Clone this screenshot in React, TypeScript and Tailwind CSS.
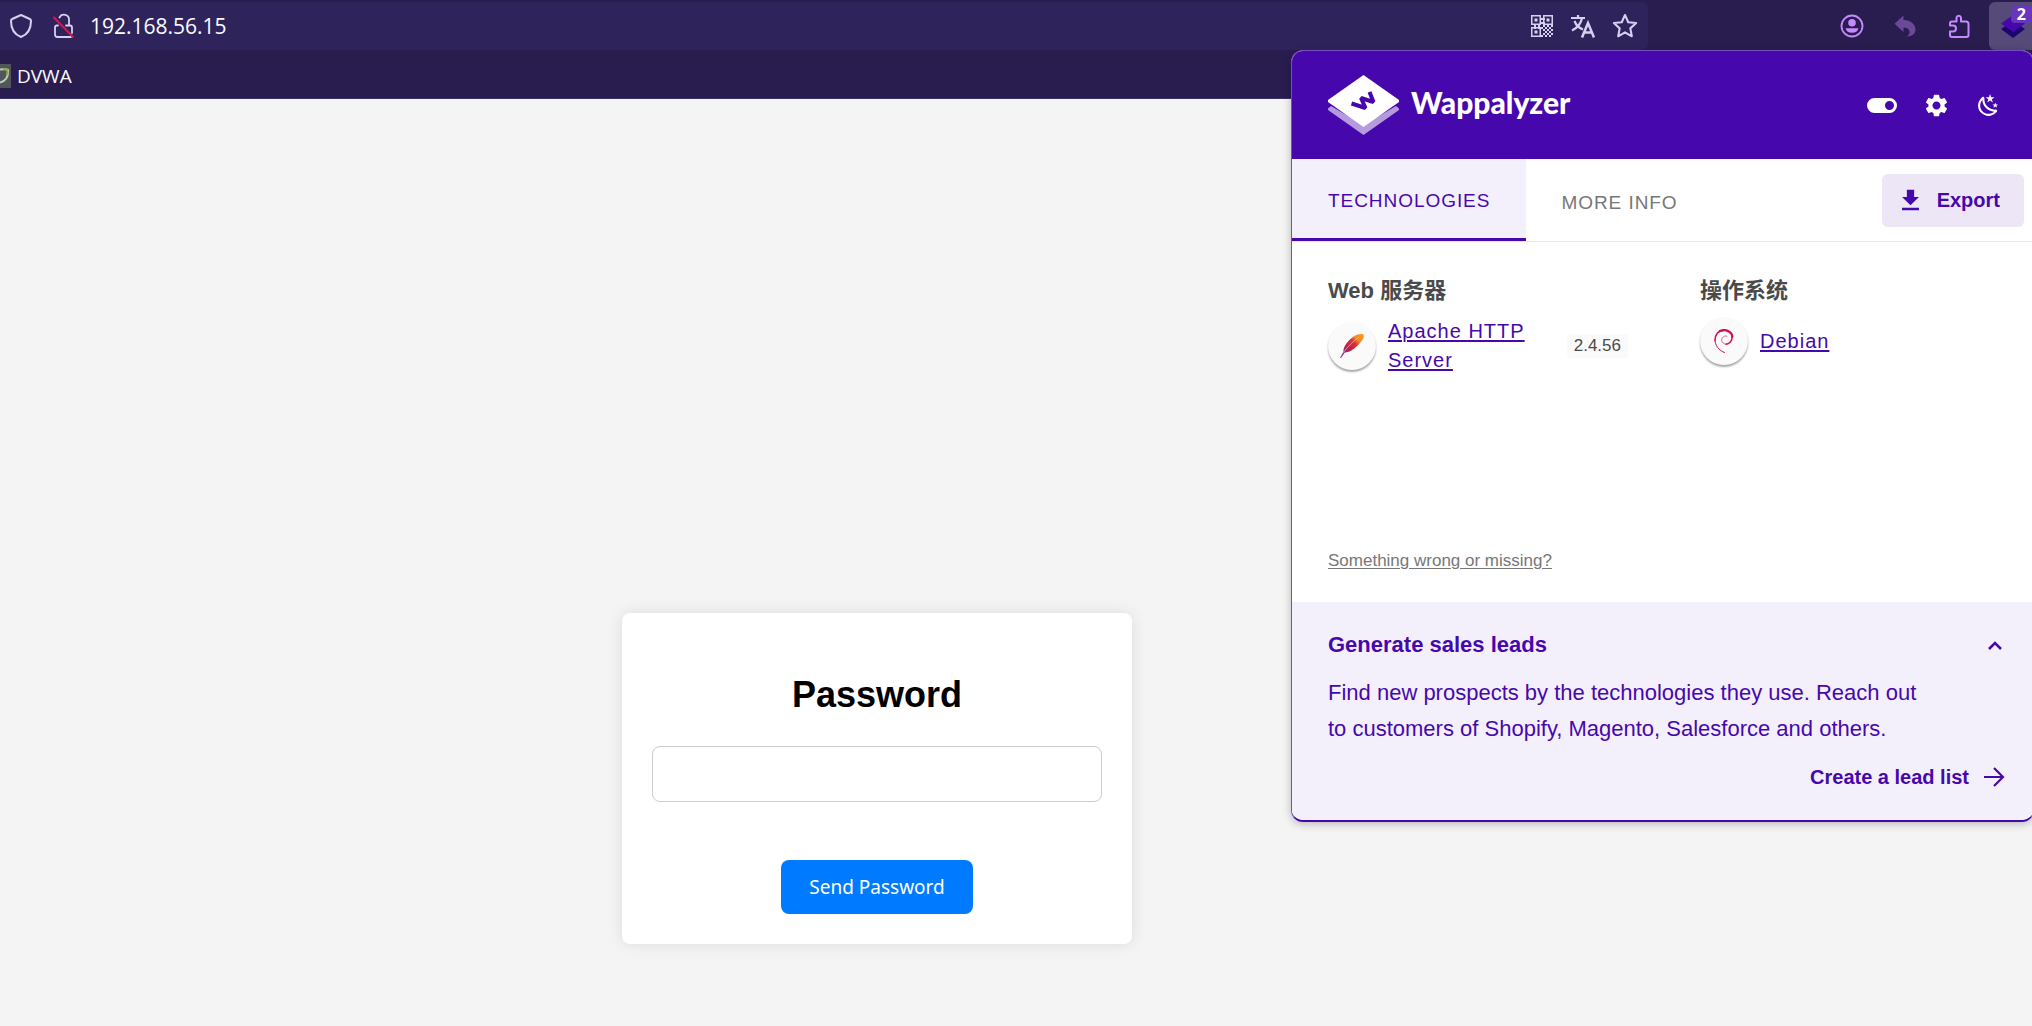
import React from "react";
import { MdDownload, MdSettings } from "react-icons/md";

const ui = "font-['Open_Sans','Noto_Sans_CJK_SC',sans-serif]";
const body = "font-['Liberation_Sans','Noto_Sans_CJK_SC',sans-serif]";

const stroke = { fill: "none", stroke: "currentColor", strokeLinecap: "round", strokeLinejoin: "round" } as const;

function ShieldIcon() {
  return (
    <svg viewBox="0 0 24 26" className="h-[26px] w-6" {...stroke} strokeWidth={2}>
      <path d="M12 2 L20.8 6 Q22 6.500 22 8 C22 16 18.500 21.500 12 24 C5.500 21.500 2 16 2 8 Q2 6.500 3.200 6 Z" />
    </svg>
  );
}

function LockIcon() {
  return (
    <svg viewBox="0 0 24 26" className="h-[26px] w-6" {...stroke} strokeWidth={1.8}>
      <path d="M8.500 4.500 A5 5 0 0 1 18 7 V12" />
      <path d="M7 12.500 H6 Q4 12.500 4 14.500 V21.500 Q4 24 6.500 24 H20 M21 20 V14.500 Q21 12.500 19 12.500 H15" />
      <path d="M2.500 4 L22.500 24.500" stroke="#e3124a" strokeWidth={2} strokeLinecap="butt" />
    </svg>
  );
}

function QrIcon() {
  const cells = [
    [10, 3], [12, 3], [10, 7], [12, 7], [3, 10], [3, 12], [7, 10], [7, 12],
    [12, 10], [16, 10], [20, 10], [10, 12], [14, 12], [18, 12],
    [12, 14], [16, 14], [20, 14], [14, 16], [18, 16],
    [12, 18], [16, 18], [20, 18], [14, 20], [18, 20], [10, 20],
  ];
  return (
    <svg viewBox="0 0 22 22" className="size-[22px]" fill="currentColor">
      <g fill="none" stroke="currentColor" strokeWidth={1.5}>
        <rect x="0.750" y="0.750" width="8.500" height="8.500" />
        <rect x="12.750" y="0.750" width="8.500" height="8.500" />
        <rect x="0.750" y="12.750" width="8.500" height="8.500" />
      </g>
      <path d="M3.500 3.500h3v3h-3zM15.500 3.500h3v3h-3zM3.500 15.500h3v3h-3z" />
      {cells.map(([x, y]) => (
        <rect key={`${x}-${y}`} x={x} y={y} width="2" height="2" />
      ))}
    </svg>
  );
}

function TranslateIcon() {
  return (
    <svg viewBox="0 0 25 25" className="size-[25px]" fill="none" stroke="currentColor" strokeWidth={2.2}>
      <path d="M1 4 H15 M8 1 V4 M12 4 C11 10 7 14 2 16.500 M4.500 7 C6 11 9 14 13 15.500" />
      <path d="M12 23.500 L18 9 L24 23.500 M14 18.500 H22" strokeWidth={2.500} />
    </svg>
  );
}

function StarIcon() {
  return (
    <svg viewBox="0 0 24 24" className="size-[26px]" {...stroke} strokeWidth={1.9}>
      <path d="M12 1.800 L15 8.500 L22.300 9.300 L16.900 14.200 L18.300 21.500 L12 17.900 L5.700 21.500 L7.100 14.200 L1.700 9.300 L9 8.500 Z" />
    </svg>
  );
}

function AccountIcon() {
  return (
    <svg viewBox="0 0 24 24" className="size-6" fill="currentColor">
      <circle cx="12" cy="12" r="10.500" fill="none" stroke="currentColor" strokeWidth="1.800" />
      <circle cx="12" cy="8.800" r="3.800" />
      <path d="M5.500 14.300 H18.500 Q17.300 18.800 12 18.800 Q6.700 18.800 5.500 14.300Z" />
    </svg>
  );
}

function UndoIcon() {
  return (
    <svg viewBox="0 0 22 22" className="size-[22px]" fill="currentColor">
      <path d="M9.500 0.500 V5 C17 5 21.500 9.500 21.500 14.500 C21.500 18.500 18.500 21.500 12.500 21.500 C17.500 19 16.500 12.500 9.500 12.500 V17 L0.500 8.700 Z" />
    </svg>
  );
}

function PuzzleIcon() {
  return (
    <svg viewBox="0 0 22 26" className="h-[26px] w-[22px]" {...stroke} strokeWidth={2}>
      <path d="M2 12 V10.500 Q2 8.500 4 8.500 H8.500 V4.500 A2.300 2.300 0 0 1 13 4.500 V8.500 H18 Q20.500 8.500 20.500 11 V22 Q20.500 24 18.500 24 H4 Q2 24 2 22 V18.500 H5 A3 3 0 0 0 5 12.500 H2 Z" />
    </svg>
  );
}

function StackIcon() {
  return (
    <svg viewBox="0 0 24 24" className="size-6">
      <path d="M12 7 L24 15 L12 24 L0 15 Z" fill="#1d0470" />
      <path d="M12 1 L24 9.500 L12 18 L0 9.500 Z" fill="#4608ad" />
    </svg>
  );
}

function WappalyzerMark() {
  return (
    <svg viewBox="0 0 71 60" className="h-[60px] w-[71px]">
      <path d="M0 33.500 L0 35 L35.500 60 L71 35 V33.500 L68 31 L35.500 50 L3 31 Z" fill="#b59bde" />
      <path d="M35.500 0 L71 25 V27 L35.500 52 L0 27 V25 Z" fill="#fff" />
      <path d="M23.500 28.500 L37.500 33 L33 23 L45.500 27 L41.500 17" fill="none" stroke="#4608ad" strokeWidth="4" strokeLinejoin="bevel" />
    </svg>
  );
}

function ToggleIcon() {
  return (
    <svg viewBox="2 7 20 10" className="h-[15px] w-[30px]" fill="currentColor">
      <path d="M17 7H7a5 5 0 0 0 0 10h10a5 5 0 0 0 0-10m0 8a3 3 0 1 1 0-6a3 3 0 0 1 0 6" />
    </svg>
  );
}

function NightIcon() {
  return (
    <svg viewBox="0 0 24 24" className="size-[25px]" fill="currentColor">
      <path d="M17.750 4.090L15.220 6.030L16.130 9.090L13.500 7.280L10.870 9.090L11.780 6.030L9.250 4.090L12.440 4L13.500 1L14.560 4L17.750 4.090M21.250 11L19.610 12.250L20.200 14.230L18.500 13.060L16.800 14.230L17.390 12.250L15.750 11L17.810 10.950L18.500 9L19.190 10.950L21.250 11M18.970 15.950C19.800 15.870 20.690 17.050 20.160 17.800C19.840 18.250 19.500 18.670 19.080 19.070C15.170 23 8.840 23 4.940 19.070C1.030 15.170 1.030 8.830 4.940 4.930C5.340 4.530 5.760 4.170 6.210 3.850C6.960 3.320 8.140 4.210 8.060 5.040C7.790 7.900 8.750 10.870 10.950 13.060C13.140 15.260 16.100 16.220 18.970 15.950M17.330 17.970C14.500 17.810 11.700 16.640 9.530 14.500C7.360 12.310 6.200 9.500 6.040 6.680C3.230 9.820 3.340 14.640 6.350 17.660C9.370 20.670 14.190 20.780 17.330 17.970Z" />
    </svg>
  );
}

function FeatherIcon() {
  return (
    <svg viewBox="0 0 24 24" className="size-6">
      <defs>
        <linearGradient id="feather" x1="1" y1="0" x2="0" y2="1">
          <stop offset="0" stopColor="#f9a11b" />
          <stop offset="0.250" stopColor="#f08a22" />
          <stop offset="0.380" stopColor="#d9333a" />
          <stop offset="0.600" stopColor="#c4203f" />
          <stop offset="0.750" stopColor="#93287a" />
          <stop offset="1" stopColor="#6b3a95" />
        </linearGradient>
      </defs>
      <path d="M0 24 L3.500 17.500 C3 14 6 9 11 4.500 C15 1 20 -0.500 23 0.300 C25 2 23.500 5 20 9 C15 14.500 10 18.500 4.800 18.500 L1 24 Z" fill="url(#feather)" />
      <path d="M3.500 18.500 C8 12 13 7.500 18.500 3.500" fill="none" stroke="#f3b9b9" strokeWidth="0.700" />
    </svg>
  );
}

function DebianIcon() {
  return (
    <svg viewBox="0 0 20 24" className="h-6 w-5" fill="none" stroke="#d70a53" strokeLinecap="round">
      <path d="M10.500 23.500 C5 21.500 1 16.500 1 11" strokeWidth="1" />
      <path d="M1 11.500 C1 5.500 4.500 1.200 10 1.200" strokeWidth="1.600" />
      <path d="M6 2 C12 -0.500 18.500 3 18.200 8" strokeWidth="2.200" />
      <path d="M18.200 7 C18.500 12 15 15.200 12 15.200" strokeWidth="1.400" />
      <path d="M13 15.200 C8.500 15.500 6.500 11.500 8.300 9 C9.500 7 11.500 6.500 13 7.200" strokeWidth="0.900" opacity="0.700" />
    </svg>
  );
}

function IconButton({ label, children, className = "" }: { label: string; children: React.ReactNode; className?: string }) {
  return (
    <button type="button" aria-label={label} className={`flex items-center justify-center ${className}`}>
      {children}
    </button>
  );
}

function Technology({ icon, name, version }: { icon: React.ReactNode; name: string; version?: string }) {
  return (
    <div className="flex items-center">
      <span className="flex size-12 shrink-0 items-center justify-center rounded-full bg-[#fafafa] shadow-[0_2px_2px_rgba(0,0,0,0.35)]">
        {icon}
      </span>
      <a href="#" className="ml-3 w-[150px] text-xl leading-[29px] tracking-wider text-[#4608ad] underline underline-offset-2">
        {name}
      </a>
      {version && (
        <span className="mr-[72px] ml-auto rounded-sm bg-[#fafafa] px-[7px] text-[17px] leading-6 text-[#4a4a4a]">{version}</span>
      )}
    </div>
  );
}

function BrowserChrome() {
  return (
    <header className={`border-b border-[#3b3168] bg-[#291d4f] text-[#fbfbfe] ${ui}`}>
      <div className="flex h-[50px] items-stretch pt-0.5">
        <div className="flex grow items-center rounded-r-md bg-[#2e245b] pr-2.5 pl-[9px] text-[#d8d0f0]">
          <IconButton label="Tracking protection"><ShieldIcon /></IconButton>
          <IconButton label="Connection not secure" className="ml-[18px]"><LockIcon /></IconButton>
          <input aria-label="Address" defaultValue="192.168.56.15" className="ml-[15px] min-w-0 grow bg-transparent pt-0.5 text-[21px] text-[#fbfbfe] outline-none" />
          <div className="flex items-center gap-[17px]">
            <IconButton label="QR code"><QrIcon /></IconButton>
            <IconButton label="Translate"><TranslateIcon /></IconButton>
            <IconButton label="Bookmark this page"><StarIcon /></IconButton>
          </div>
        </div>
        <div className="flex w-[384px] shrink-0 items-center pl-[192px] text-[#c689ff]">
          <IconButton label="Account"><AccountIcon /></IconButton>
          <IconButton label="Undo" className="ml-[30px] text-[#6b4999]"><UndoIcon /></IconButton>
          <IconButton label="Extensions" className="ml-[32px]"><PuzzleIcon /></IconButton>
          <button type="button" aria-label="Wappalyzer, 2 technologies" className="relative ml-auto flex h-12 w-[43px] items-center rounded-l-md bg-[#564a78] pl-3">
            <StackIcon />
            <span className="absolute top-1 right-0 rounded-sm bg-[#6a35bd] px-1.5 text-base leading-[17px] font-bold text-white">2</span>
          </button>
        </div>
      </div>
      <nav aria-label="Bookmarks" className="flex h-12 items-center pt-1">
        <a href="#" className="flex items-center gap-1.5 text-[19px] leading-6">
          <svg viewBox="0 0 11 24" className="h-6 w-[11px]">
            <rect width="11" height="24" fill="#50575a" />
            <path d="M0 5.500 C4 5 7 5 8 6 C8.500 12 6 17 0 18.500" fill="none" stroke="#c3cbb8" strokeWidth="2" />
            <path d="M3 5 C8 4.500 8 7 7 11" fill="none" stroke="#8fae3c" strokeWidth="2" />
          </svg>
          DVWA
        </a>
      </nav>
    </header>
  );
}

function WappalyzerPopup() {
  return (
    <aside aria-label="Wappalyzer" className="absolute top-[50px] -right-0.5 z-10 w-[743px] overflow-hidden rounded-xl border border-b-2 border-[#7a4cc4] border-b-[#4608ad] bg-white shadow-[0_2px_8px_rgba(0,0,0,0.25)]">
      <div className="flex h-[108px] items-center bg-[#4608ad] pr-8 pl-9 text-white">
        <WappalyzerMark />
        <span className="ml-3 pb-1.5 font-[Lato] text-[30px] leading-9 font-black">Wappalyzer</span>
        <div className="ml-auto flex items-center gap-[26px]">
          <IconButton label="Enable"><ToggleIcon /></IconButton>
          <IconButton label="Settings"><MdSettings className="size-[27px]" /></IconButton>
          <IconButton label="Dark mode"><NightIcon /></IconButton>
        </div>
      </div>

      <div className="flex h-[83px] items-center border-b border-[#e8e8e8] pr-[9px]">
        <div role="tablist" className="flex h-full grow text-[19px] tracking-wider">
          <button type="button" role="tab" aria-selected="true" className="border-b-[3px] border-[#4608ad] bg-[#f4f0fb] px-9 pt-1.5 text-[#4608ad]">TECHNOLOGIES</button>
          <button type="button" role="tab" aria-selected="false" className="px-[35px] pt-1.5 text-[#777]">MORE INFO</button>
        </div>
        <button type="button" className="flex h-[53px] items-center gap-3 rounded-md bg-[#ece6f6] pr-6 pl-3.5 text-xl font-bold text-[#4608ad]">
          <MdDownload className="size-[29px]" />
          Export
        </button>
      </div>

      <div className="flex h-[360px] flex-col justify-between pt-[33px] pb-[29px] pl-9">
        <div className="grid grid-cols-[372px_1fr]">
          <section>
            <h2 className="mb-2.5 text-[22px] leading-8 font-bold text-[#4a4a4a]">Web 服务器</h2>
            <Technology icon={<FeatherIcon />} name="Apache HTTP Server" version="2.4.56" />
          </section>
          <section>
            <h2 className="mb-2.5 text-[22px] leading-8 font-bold text-[#4a4a4a]">操作系统</h2>
            <Technology icon={<DebianIcon />} name="Debian" />
          </section>
        </div>
        <a href="#" className="self-start text-[17px] leading-6 text-[#777] underline underline-offset-2">Something wrong or missing?</a>
      </div>

      <section className="bg-[#f4f0fb] pt-[25px] pr-7 pb-[25px] pl-9 text-[#4608ad]">
        <div className="flex items-center justify-between">
          <h2 className="text-[22px] leading-9 font-bold">Generate sales leads</h2>
          <IconButton label="Collapse">
            <svg viewBox="0 0 20 20" className="size-5" fill="none" stroke="currentColor" strokeWidth="2.500">
              <path d="M4 14 L10 8 L16 14" />
            </svg>
          </IconButton>
        </div>
        <p className="mt-3 w-[600px] text-[22px] leading-9">
          Find new prospects by the technologies they use. Reach out to customers of Shopify, Magento, Salesforce and others.
        </p>
        <a href="#" className="mt-3 flex items-center justify-end gap-3.5 text-xl leading-9 font-bold">
          Create a lead list
          <svg viewBox="0 0 22 22" className="size-[22px]" fill="none" stroke="currentColor" strokeWidth="2.200">
            <path d="M1 11 H19 M11 2 L20 11 L11 20" />
          </svg>
        </a>
      </section>
    </aside>
  );
}

export default function App() {
  return (
    <div className={`relative flex min-h-screen flex-col overflow-hidden bg-[#f4f4f4] ${body}`}>
      <BrowserChrome />
      <WappalyzerPopup />
      <main className="flex grow items-end justify-center pr-[278px] pb-[82px]">
        <form className="flex w-[510px] flex-col items-center rounded-lg bg-white px-[30px] pt-[61px] pb-[30px] shadow-[0_0_15px_rgba(0,0,0,0.1)]" onSubmit={(e) => e.preventDefault()}>
          <label htmlFor="password" className="text-4xl leading-[42px] font-bold text-black">Password</label>
          <input id="password" type="password" className="mt-[30px] h-14 w-full rounded-lg border border-[#ccc] bg-white px-4 text-xl" />
          <button type="submit" className="mt-[58px] h-[54px] w-48 rounded-lg bg-[#007bff] font-['Noto_Sans',sans-serif] text-[19px] text-white">Send Password</button>
        </form>
      </main>
    </div>
  );
}
